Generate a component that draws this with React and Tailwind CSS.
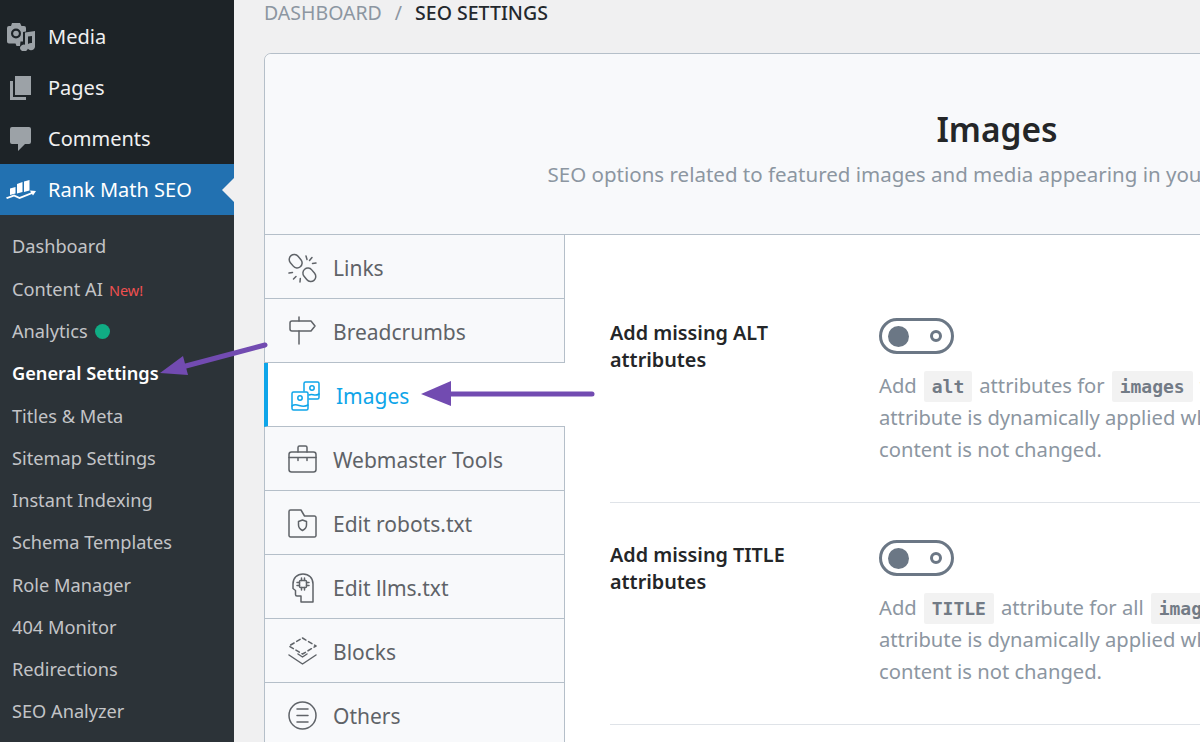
import React from 'react';

const font = { fontFamily: '"Noto Sans", "Open Sans", sans-serif' };

const subItems = [
  'Dashboard',
  'Content AI',
  'Analytics',
  'General Settings',
  'Titles & Meta',
  'Sitemap Settings',
  'Instant Indexing',
  'Schema Templates',
  'Role Manager',
  '404 Monitor',
  'Redirections',
  'SEO Analyzer',
];

function MediaIcon() {
  return (
    <svg width="28" height="28" viewBox="0 0 28 28" fill="#9ca2a7">
      <path
        fillRule="evenodd"
        d="M5 0h8l1.500 3H17a2 2 0 0 1 2 2v3.500L16 9v9.500H13.500L13 23H9.500l-1-2.500H2a2 2 0 0 1-2-2V5a2 2 0 0 1 2-2h2zM9 5.500a5 5 0 1 0 0 10 5 5 0 0 0 0-10z"
      />
      <circle cx="9" cy="10.500" r="2.800" />
      <path d="M18 9.500l10-1.500v15.500a4 3.600 0 1 1-3-3.400V13l-4 .6V25a4 3.400 0 1 1-3-3.300z" />
    </svg>
  );
}

function PagesIcon() {
  return (
    <svg width="21" height="24" viewBox="0 0 21 24" fill="#9ca2a7">
      <path d="M5 0h16v19H5z" />
      <path d="M0 5h3v16h13v3H0z" />
    </svg>
  );
}

function CommentsIcon() {
  return (
    <svg width="21" height="24" viewBox="0 0 21 24" fill="#9ca2a7">
      <path d="M2 0h17a2 2 0 0 1 2 2v13a2 2 0 0 1-2 2h-4l-7 7v-7H2a2 2 0 0 1-2-2V2a2 2 0 0 1 2-2z" />
    </svg>
  );
}

function RankMathIcon() {
  return (
    <svg width="30" height="20" viewBox="0 0 30 20" fill="#fff">
      <path d="M4 8.500l5.500-1.500v6.500l-5.500 1.500z" />
      <path d="M11 4l5.500-2v10l-5.500 1.500z" />
      <path d="M18 1.500l5.500-1.500v10.500l-5.500 1.500z" />
      <path d="M0 17.500l8-3 5.500 2.500L25 12.500l-1-2 6 .5-3 4.500-1-1.600-12.500 5-5.500-2.500L1 19z" />
    </svg>
  );
}

function TabIcon({ name, color = '#5f6368' }) {
  const common = { fill: 'none', stroke: color, strokeWidth: 1.500, strokeLinecap: 'round', strokeLinejoin: 'round' };
  const paths = {
    links: (
      <>
        <rect x="2.500" y="1" width="10" height="14.500" rx="5" transform="rotate(-40 7.500 8)" />
        <rect x="16.500" y="14.500" width="10" height="14.500" rx="5" transform="rotate(-40 21.500 22)" />
        <path d="M18 3l1 3.500M24 4.500l-2.500 3M28 10l-3.500.5M1 20l3.500-.6M5.500 26l2.500-2.500M12 29l.3-3.500" />
      </>
    ),
    breadcrumbs: (
      <>
        <path d="M2 6a2 2 0 0 1 2-2h19l4 5-4 5H4a2 2 0 0 1-2-2z" />
        <path d="M11 0v4M11 14v13" />
      </>
    ),
    images: (
      <>
        <path d="M14 10V2.500A1.500 1.500 0 0 1 15.500 1H27.500A1.500 1.500 0 0 1 29 2.500V16.500A1.500 1.500 0 0 1 27.500 18H19" />
        <circle cx="22" cy="7" r="2.200" />
        <path d="M19 14c4-2 5 2 10-1" />
        <rect x="2" y="11" width="16" height="18" rx="1.500" />
        <circle cx="10" cy="17" r="2.200" />
        <path d="M2 25c5-4 9 3 16-1" />
      </>
    ),
    tools: (
      <>
        <rect x="1" y="7" width="27" height="20" rx="2.500" />
        <path d="M10 7V2.500A1.500 1.500 0 0 1 11.500 1h6A1.500 1.500 0 0 1 19 2.500V7M1 12.500h27M10 12.500v3M19 12.500v3" />
      </>
    ),
    robots: (
      <>
        <path d="M1 2.500A1.500 1.500 0 0 1 2.500 1h10.500l3.500 6h10A1.500 1.500 0 0 1 28 8.500v18a1.500 1.500 0 0 1-1.500 1.500h-24A1.500 1.500 0 0 1 1 26.500z" />
        <path d="M14.500 11l4 1.500v3.500c0 2.500-2 4.500-4 5.500-2-1-4-3-4-5.500v-3.500z" />
      </>
    ),
    llms: (
      <>
        <path d="M25 29H13v-6H9a1.500 1.500 0 0 1-1.500-1.500v-4L5 15.500V11C5 5 9 1 15 1s10 4 10 10z" />
        <rect x="11.500" y="7.500" width="7" height="7" rx="1" />
        <path d="M13.500 5v2.500M16.500 5v2.500M13.500 14.500V17M16.500 14.500V17M9 9.500h2.500M9 12.500h2.500M18.500 9.500H21M18.500 12.500H21" />
      </>
    ),
    blocks: (
      <>
        <path d="M14.500 1L28 9l-13.500 8L1 9z" strokeDasharray="4 3" />
        <path d="M1 18l13.500 9L28 18M10 17l4.500 3 4.500-3" />
      </>
    ),
    others: (
      <>
        <circle cx="14.500" cy="14.500" r="13.500" />
        <path d="M9 8h11M9 14.500h11M9 21h11" />
      </>
    ),
  };
  return (
    <svg width="30" height="30" viewBox="0 0 30 30" className="-mr-px overflow-visible" {...common}>
      {paths[name]}
    </svg>
  );
}

const tabs = [
  { id: 'links', label: 'Links' },
  { id: 'breadcrumbs', label: 'Breadcrumbs' },
  { id: 'images', label: 'Images', active: true },
  { id: 'tools', label: 'Webmaster Tools' },
  { id: 'robots', label: 'Edit robots.txt' },
  { id: 'llms', label: 'Edit llms.txt' },
  { id: 'blocks', label: 'Blocks' },
  { id: 'others', label: 'Others' },
];

function Toggle() {
  return (
    <div className="flex h-[36px] w-[75px] items-center justify-between rounded-full border-[3px] border-[#6b7785] pl-[6px] pr-[9px]">
      <span className="h-[21px] w-[21px] rounded-full bg-[#6b7785]" />
      <span className="h-[12px] w-[12px] rounded-full border-[3px] border-[#6b7785]" />
    </div>
  );
}

function Code({ children }) {
  return (
    <code
      className="mx-[7px] rounded-[2px] bg-[#f2f2f2] px-[8px] py-[5px] text-[18px] font-bold leading-none text-[#727b86]"
      style={{ fontFamily: '"DejaVu Sans Mono", monospace' }}
    >
      {children}
    </code>
  );
}

function SettingRow({ title, children }) {
  return (
    <div className="flex h-[222px] border-b border-[#dfe3e8] pt-[37px]">
      <div className="mt-px w-[269px] shrink-0 text-[19.800px] font-semibold leading-[27px] text-[#242628]">{title}</div>
      <div>
        <Toggle />
        <div className="mt-[15px] whitespace-nowrap text-[20.200px] leading-[32px] text-[#8c96a1]">{children}</div>
      </div>
    </div>
  );
}

export default function App() {
  return (
    <div className="relative flex h-[742px] w-[1200px] overflow-hidden bg-[#f0f0f1]" style={font}>
      {/* wp sidebar */}
      <aside className="w-[234px] shrink-0 bg-[#2c3338]">
        <div className="flex flex-col bg-[#1d2327] pt-[11px] text-[20px] text-[#f0f0f1]">
          <div className="flex h-[51px] items-center gap-[13px] pl-[7px]">
            <MediaIcon />
            <span>Media</span>
          </div>
          <div className="flex h-[51px] items-center gap-[17px] pl-[10px]">
            <PagesIcon />
            <span>Pages</span>
          </div>
          <div className="flex h-[51px] items-center gap-[17px] pl-[10px]">
            <CommentsIcon />
            <span className="mt-[1px]">Comments</span>
          </div>
          <div className="relative flex h-[51px] items-center gap-[12px] bg-[#2271b1] pl-[6px] text-white">
            <RankMathIcon />
            <span>Rank Math SEO</span>
            <div className="absolute right-0 top-[14px] h-0 w-0 border-y-[12px] border-r-[12px] border-y-transparent border-r-[#f0f0f1]" />
          </div>
        </div>
        <ul className="pt-[11px] text-[18.200px] text-[#c3c4c7]">
          {subItems.map((item) => (
            <li key={item} className={`flex h-[42.270px] items-center pl-[12px] ${item === 'General Settings' ? 'font-semibold text-white' : ''}`}>
              {item}
              {item === 'Content AI' && <span className="ml-[6px] mt-[2px] text-[14.500px] text-[#f05050]">New!</span>}
              {item === 'Analytics' && <span className="ml-[7px] h-[15px] w-[15px] rounded-full bg-[#10ac84]" />}
            </li>
          ))}
        </ul>
      </aside>

      {/* main area */}
      <main className="min-w-0 flex-1 pl-[30px]">
        <div className="flex h-[53px] items-start gap-[13px] text-[19.500px] leading-[26px]">
          <span className="text-[#8c96a1]">DASHBOARD</span>
          <span className="text-[#8c96a1]">/</span>
          <span className="font-medium text-[#23282d]">SEO SETTINGS</span>
        </div>

        <div className="w-[1466px] rounded-t-[7px] border border-[#b5bfc9] bg-white">
          <div className="h-[180px] rounded-t-[7px] bg-[#f8f9fb] pt-[50px] text-center">
            <h1 className="text-[33.500px] font-semibold leading-[50px] text-[#242628]">Images</h1>
            <p className="mt-[6px] pr-[72px] text-[20.500px] leading-[28px] text-[#8c96a1]">
              SEO options related to featured images and media appearing in your website content.
            </p>
          </div>
          <div className="flex border-t border-[#b5bfc9]">
            <nav className="w-[300px] shrink-0">
              {tabs.map((tab) =>
                tab.active ? (
                  <div
                    key={tab.id}
                    className="-ml-px flex h-[64px] items-center gap-[17px] border-b border-l-[4px] border-b-[#b5bfc9] border-l-[#0ea5e9] bg-white pl-[22px] pt-[3px] text-[21px] text-[#0ea5e9]"
                  >
                    <TabIcon name={tab.id} color="#0ea5e9" />
                    <span className="mt-[2px]">{tab.label}</span>
                  </div>
                ) : (
                  <div
                    key={tab.id}
                    className="flex h-[64px] items-center gap-[16px] border-r border-b border-[#b5bfc9] bg-[#f8f9fb] pl-[23px] pt-[3px] text-[21px] text-[#5f6368]"
                  >
                    <TabIcon name={tab.id} />
                    <span className="mt-[2px]">{tab.label}</span>
                  </div>
                )
              )}
            </nav>
            <div className="flex-1 pl-[45px] pr-[40px] pt-[46px]">
              <SettingRow title={<>Add missing ALT<br />attributes</>}>
                Add<Code>alt</Code>attributes for<Code>images</Code>without<Code>alt</Code>attributes automatically. The<br />
                attribute is dynamically applied when the content is displayed, and the stored<br />
                content is not changed.
              </SettingRow>
              <SettingRow title={<>Add missing TITLE<br />attributes</>}>
                Add<Code>TITLE</Code>attribute for all<Code>images</Code>without a<Code>TITLE</Code>attribute automatically. The<br />
                attribute is dynamically applied when the content is displayed, and the stored<br />
                content is not changed.
              </SettingRow>
            </div>
          </div>
        </div>
      </main>

      {/* annotation arrows */}
      <svg className="absolute left-0 top-0" width="1200" height="742" fill="#724bb1" stroke="#724bb1">
        <path d="M265 345L182 367" strokeWidth="5" strokeLinecap="round" />
        <path d="M160 373l23-17 5 19z" stroke="none" />
        <path d="M592 394H450" strokeWidth="5" strokeLinecap="round" />
        <path d="M421 394l30-13v25z" stroke="none" />
      </svg>
    </div>
  );
}
